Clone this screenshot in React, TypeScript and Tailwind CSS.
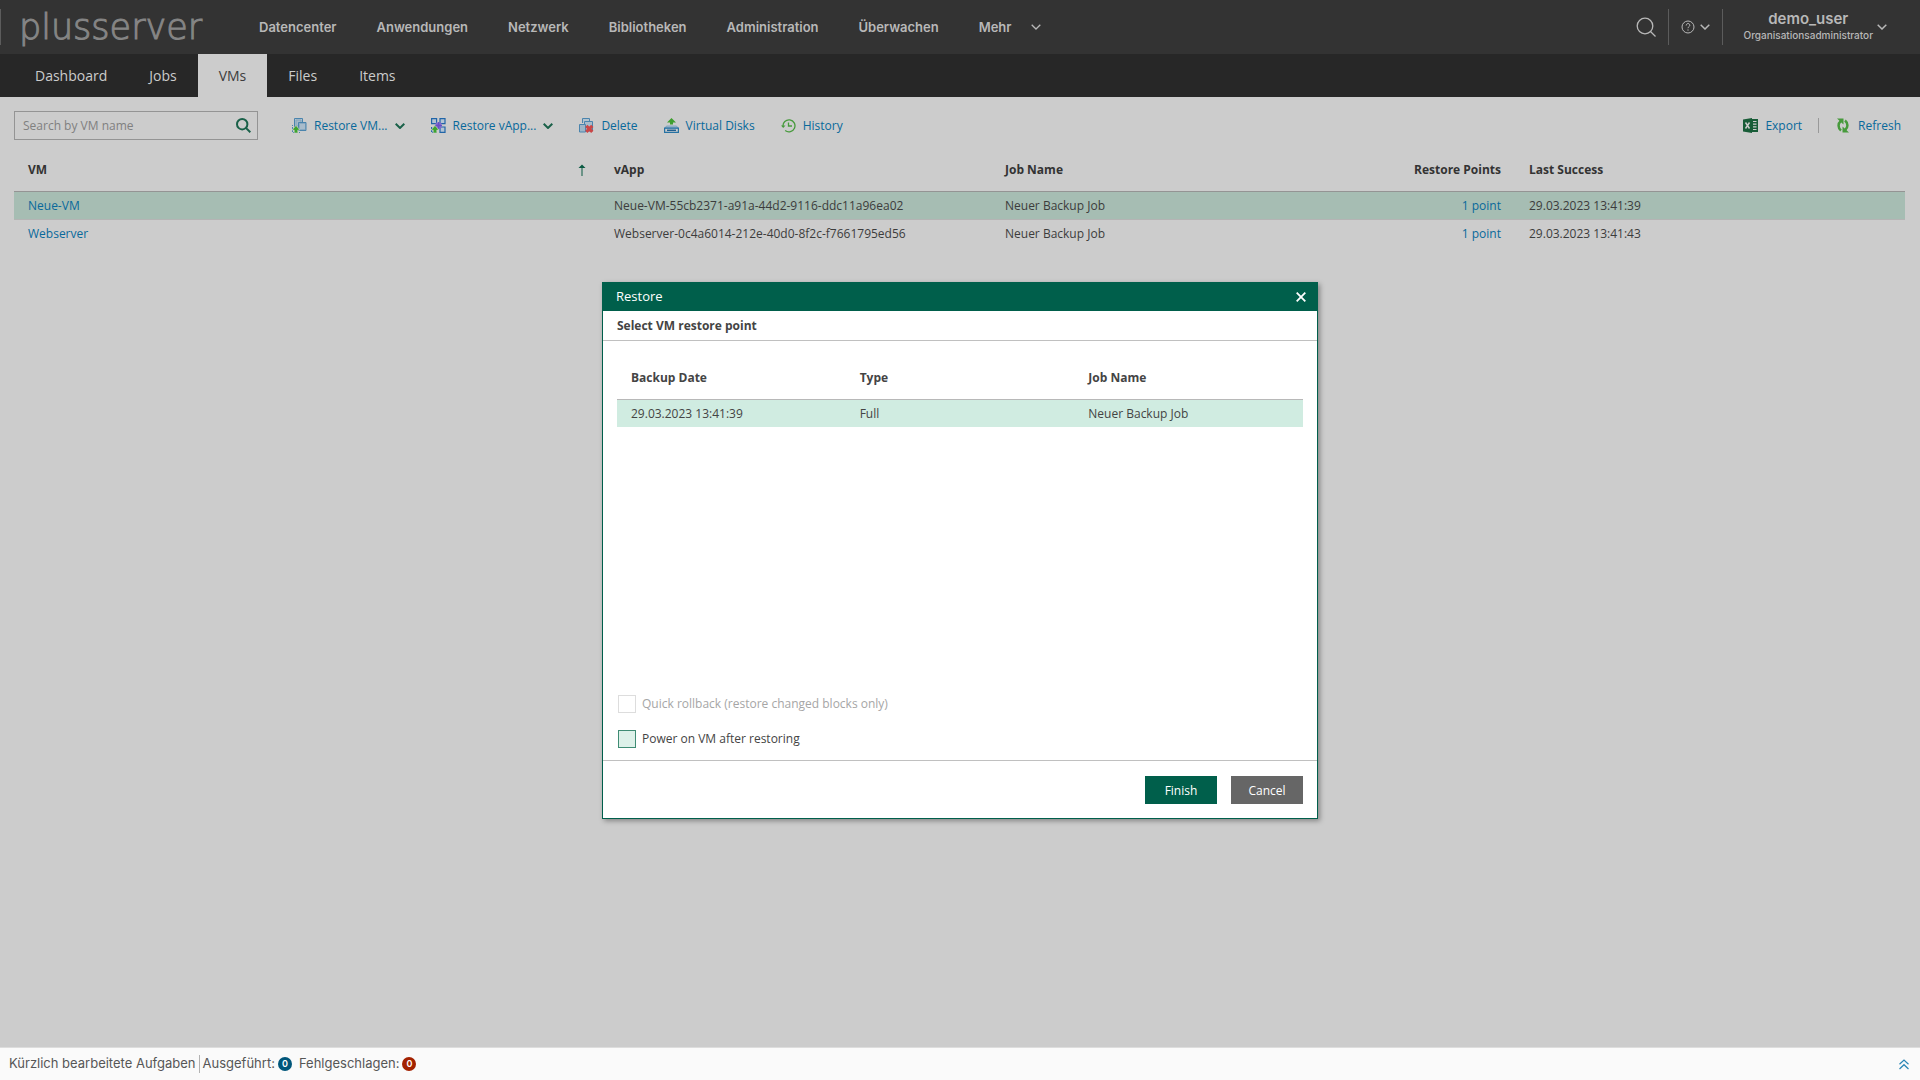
import React from "react";

const RestoreArrow = () => (
  <path d="M0 12l4-4.500 4 4.500H5.800v3H2.200v-3z" fill="#3da52e" stroke="#cccccc" strokeWidth=".6" />
);

const Icon = ({ children }: { children: React.ReactNode }) => (
  <svg viewBox="0 0 15 15" className="size-[15px] shrink-0" fill="none" aria-hidden="true">
    {children}
  </svg>
);

const RestoreVmIcon = () => (
  <Icon>
    <path d="M2.500 9V.500h8V4" fill="#b3c3cf" stroke="#4a84ad" />
    <path d="M4 2h5v6H4z" fill="#a3b8c8" stroke="#7fa3bd" />
    <path d="M6.500 4.500h7.500v8H6.500z" fill="#8aa9c1" stroke="#4a84ad" />
    <path d="M8 6h5v5H8z" fill="#a9bccb" />
    <path d="M.5 14V7M1 14.500h7" stroke="#4a84ad" strokeDasharray="2 1" />
    <RestoreArrow />
  </Icon>
);

const RestoreVappIcon = () => (
  <Icon>
    <g fill="#b4c4d4" stroke="#2065a8" strokeWidth="1.200">
      <path d="M.6.600h5v5h-5zM9 .600h5v5H9zM9 9h5v5.400H9z" />
      <path d="M.6 9v5.400H6" strokeDasharray="2 1" />
    </g>
    <path d="M5 5l5 5M10 5l-5 5" stroke="#8468cf" strokeWidth="2" />
    <path d="M4 7.500h7M7.500 4v7" stroke="#6a4fc6" strokeWidth="1.500" />
    <RestoreArrow />
  </Icon>
);

const DeleteIcon = () => (
  <Icon>
    <path d="M3.500 5V.500h7V4" fill="#b3c3cf" stroke="#4a84ad" />
    <path d="M5.500 3.500H13.500V13H5.500z" fill="#a9bccb" stroke="#4a84ad" />
    <path d="M.5 6.500h6v7.500h-6z" fill="#9db5c7" stroke="#4a84ad" />
    <path d="M7.300 7.800l6 6M13.300 7.800l-6 6" stroke="#cb4646" strokeWidth="3.200" />
  </Icon>
);

const DisksIcon = () => (
  <Icon>
    <path d="M7.500 0L12 4.500H9v2H6v-2H3z" fill="#3f9f2f" />
    <path d="M2.500 8L1 10h13l-1.500-2z" fill="#a9bccb" stroke="#6f9cbb" strokeWidth=".8" />
    <path d="M.6 10.200h13.800v4.200H.6z" stroke="#2672a3" strokeWidth="1.200" />
    <path d="M3 12.300h9" stroke="#1f5f90" strokeWidth="1.500" />
  </Icon>
);

const HistoryIcon = () => (
  <Icon>
    <path d="M2 8.500A6 6 0 1 1 4.200 12.500" stroke="#479a3c" strokeWidth="1.300" />
    <path d="M0 7.500h4.500L2.200 10z" fill="#479a3c" />
    <path d="M7.500 4.500V8H11" stroke="#479a3c" strokeWidth="1.300" />
  </Icon>
);

const ExcelIcon = () => (
  <Icon>
    <path d="M0 1.500L9 0v15L0 13.500z" fill="#185c37" />
    <path d="M9 1h6v13H9z" fill="#185c37" />
    <path d="M10 3.500h3.500M10 6.200h3.500M10 8.900h3.500M10 11.500h3.500" stroke="#cccccc" strokeWidth="1.200" />
    <path d="M2.500 4.500l4 6M6.500 4.500l-4 6" stroke="#cccccc" strokeWidth="1.500" />
  </Icon>
);

const RefreshIcon = () => (
  <Icon>
    <g fill="none" stroke="#479a3c" strokeWidth="2.500">
      <path d="M5 12.500C1.800 10 1.800 5.500 4.800 3" />
      <path d="M9 2.500c3.200 2.500 3.200 7 .2 9.500" />
    </g>
    <path d="M1 .500H7.500v6z" fill="#479a3c" />
    <path d="M13 14.500H6.500v-6z" fill="#479a3c" />
  </Icon>
);

const Chevron = ({ className, width = 1.5 }: { className: string; width?: number }) => (
  <svg viewBox="0 0 10 6" className={className} fill="none" stroke="currentColor" strokeWidth={width} aria-hidden="true">
    <path d="M.7.800L5 5 9.300.800" />
  </svg>
);

const navItems = ["Datencenter", "Anwendungen", "Netzwerk", "Bibliotheken", "Administration", "Überwachen"];
const tabs = ["Dashboard", "Jobs", "VMs", "Files", "Items"];
const rows = [
  { vm: "Neue-VM", vapp: "Neue-VM-55cb2371-a91a-44d2-9116-ddc11a96ea02", time: "29.03.2023 13:41:39" },
  { vm: "Webserver", vapp: "Webserver-0c4a6014-212e-40d0-8f2c-f7661795ed56", time: "29.03.2023 13:41:43" },
];

function TopBar() {
  return (
    <header className="flex h-[54px] shrink-0 items-center bg-[#333333] font-['Inter',sans-serif] text-[#b8b8b8]">
      <div className="h-9 w-px bg-[#5c5c5c]" />
      <a
        href="#home"
        className="ml-[18px] w-60 font-['DejaVu_Sans',sans-serif] text-[35px] leading-[54px] font-extralight text-[#858585] [-webkit-text-stroke:1px_#858585]"
      >
        plusserver
      </a>
      <nav className="flex items-center gap-10 text-[13px] leading-5 font-semibold">
        {navItems.map((item) => (
          <a key={item} href="#nav">{item}</a>
        ))}
        <button className="flex items-center gap-5">
          Mehr
          <Chevron className="h-1.5 w-2.5" width={1.3} />
        </button>
      </nav>
      <div className="ml-auto flex items-center">
        <button aria-label="Suchen" className="mr-3">
          <svg viewBox="0 0 20 20" className="size-5" fill="none" stroke="currentColor" strokeWidth="1.300">
            <circle cx="9" cy="9" r="7.800" />
            <path d="M14.500 14.500l5 5" />
          </svg>
        </button>
        <div className="h-9 w-px bg-[#5c5c5c]" />
        <button aria-label="Hilfe" className="mx-3 flex w-[29px] items-center justify-between">
          <svg viewBox="0 0 14 14" className="size-3.5" fill="none" stroke="currentColor">
            <circle cx="7" cy="7" r="6" />
            <path d="M5.200 5.500c0-2.600 3.600-2.600 3.600-.2 0 1.400-1.800 1.300-1.800 2.900M7 9.400v1.300" />
          </svg>
          <Chevron className="h-1.5 w-2.5" />
        </button>
        <div className="h-9 w-px bg-[#5c5c5c]" />
        <button className="mr-[33px] ml-[21px] flex items-center gap-1">
          <span className="text-center">
            <span className="block text-[15px] leading-4 font-semibold">demo_user</span>
            <span className="block text-[10px] leading-4 font-medium">Organisationsadministrator</span>
          </span>
          <Chevron className="h-1.5 w-2.5" />
        </button>
      </div>
    </header>
  );
}

function TabBar() {
  return (
    <nav className="flex h-[43px] bg-[#272727] pl-3.5 text-sm text-[#cccccc]">
      {tabs.map((tab) => (
        <a
          key={tab}
          href="#tab"
          className={tab === "VMs" ? "flex items-center bg-[#cccccc] px-[21px] text-[#3c3c3c]" : "flex items-center px-[21px]"}
        >
          {tab}
        </a>
      ))}
    </nav>
  );
}

function Toolbar() {
  const link = "flex items-center gap-[7px]";
  return (
    <div className="mt-3.5 flex items-center px-3.5 text-[#08699b]">
      <div className="flex h-[29px] w-[244px] items-center border border-[#949494] pr-1.5 pl-2">
        <input
          aria-label="Search by VM name"
          placeholder="Search by VM name"
          className="min-w-0 flex-1 bg-transparent text-[#3c3c3c] outline-none placeholder:text-[#808080]"
        />
        <button aria-label="Search">
          <svg viewBox="0 0 15 15" className="size-[15px]" fill="none" stroke="#1a6149" strokeWidth="2">
            <circle cx="6.200" cy="6.200" r="5.200" />
            <path d="M9.900 9.900l4.400 4.400" />
          </svg>
        </button>
      </div>
      <div className="ml-[34px] flex items-center gap-[26px]">
        <button className={link}>
          <RestoreVmIcon />
          Restore VM...
          <Chevron className="h-1.5 w-2.5 text-[#1a6149]" width={2} />
        </button>
        <button className={link}>
          <RestoreVappIcon />
          Restore vApp...
          <Chevron className="h-1.5 w-2.5 text-[#1a6149]" width={2} />
        </button>
        <button className={link}><DeleteIcon />Delete</button>
        <button className={link}><DisksIcon />Virtual Disks</button>
        <button className={link}><HistoryIcon />History</button>
      </div>
      <div className="mr-[5px] ml-auto flex items-center">
        <button className={link}><ExcelIcon />Export</button>
        <div className="mr-[17px] ml-4 h-[15px] w-px bg-[#999999]" />
        <button className={link}><RefreshIcon />Refresh</button>
      </div>
    </div>
  );
}

function VmTable() {
  return (
    <div className="mt-2 pr-[15px] pl-3.5">
      <table className="w-full table-fixed border-collapse text-left text-[#3c3c3c]">
        <colgroup>
          <col />
          <col className="w-[391px]" />
          <col className="w-[390px]" />
          <col className="w-[134px]" />
          <col className="w-[390px]" />
        </colgroup>
        <thead>
          <tr className="h-[43px] border-b border-[#949494] text-[#333333] *:px-3.5 *:pt-0.5 *:font-bold">
            <th>
              <span className="flex items-center justify-between">
                VM
                <svg viewBox="0 0 8 12" className="h-3 w-2" fill="none" stroke="#0a5a42" aria-label="aufsteigend">
                  <path d="M4 12V2" />
                  <path d="M.5 4L4 .500 7.500 4z" fill="#0a5a42" stroke="none" />
                </svg>
              </span>
            </th>
            <th>vApp</th>
            <th>Job Name</th>
            <th className="text-right whitespace-nowrap">Restore Points</th>
            <th>Last Success</th>
          </tr>
        </thead>
        <tbody>
          {rows.map((row, i) => (
            <tr
              key={row.vm}
              className={
                i === 0
                  ? "h-7 border-b border-[#b4b4b4] bg-[#a6bdb3] *:px-3.5 *:pt-0.5"
                  : "h-7 *:px-3.5 *:pt-0.5"
              }
            >
              <td><a href="#vm" className="text-[#08699b]">{row.vm}</a></td>
              <td className="whitespace-nowrap">{row.vapp}</td>
              <td>Neuer Backup Job</td>
              <td className="text-right"><a href="#points" className="text-[#08699b]">1 point</a></td>
              <td>{row.time}</td>
            </tr>
          ))}
        </tbody>
      </table>
    </div>
  );
}

function RestoreDialog() {
  return (
    <div
      role="dialog"
      aria-labelledby="restore-title"
      className="flex h-[537px] w-[716px] flex-col border border-[#005f4b] bg-white text-[#444444] shadow-[2px_2px_5px_rgba(0,0,0,0.35)]"
    >
      <div className="flex h-7 items-center justify-between bg-[#005f4b] pr-[11px] pl-[13px] text-white">
        <h2 id="restore-title" className="text-[13px]">Restore</h2>
        <button aria-label="Close">
          <svg viewBox="0 0 10 10" className="size-2.5" stroke="currentColor" strokeWidth="1.800">
            <path d="M.7.700l8.600 8.600M9.300.700L.7 9.300" />
          </svg>
        </button>
      </div>
      <h3 className="flex h-[30px] items-center border-b border-[#c0c0c0] px-3.5 font-bold">Select VM restore point</h3>
      <div className="flex-1 px-3.5 pt-[15px]">
        <table className="w-full table-fixed border-collapse text-left">
          <thead>
            <tr className="h-[43px] border-b border-[#b8b8b8] *:px-3.5 *:pt-0.5 *:font-bold">
              <th>Backup Date</th>
              <th>Type</th>
              <th>Job Name</th>
            </tr>
          </thead>
          <tbody>
            <tr className="h-7 bg-[#d0ece1] *:px-3.5 *:pt-0.5">
              <td>29.03.2023 13:41:39</td>
              <td>Full</td>
              <td>Neuer Backup Job</td>
            </tr>
          </tbody>
        </table>
      </div>
      <div className="flex flex-col gap-[17px] px-[15px] pb-3">
        <label className="flex items-center gap-1.5 text-[#a6a6a6]">
          <input type="checkbox" disabled className="size-[18px] appearance-none border border-[#dddddd]" />
          Quick rollback (restore changed blocks only)
        </label>
        <label className="flex items-center gap-1.5">
          <input type="checkbox" className="size-[18px] appearance-none border border-[#3f8c74] bg-[#ddf1e9]" />
          Power on VM after restoring
        </label>
      </div>
      <div className="flex justify-end gap-3.5 border-t border-[#c0c0c0] px-3.5 pt-[15px] pb-3.5 text-white">
        <button className="h-7 w-[72px] bg-[#005f4b] pt-0.5">Finish</button>
        <button className="h-7 w-[72px] bg-[#666666] pt-0.5">Cancel</button>
      </div>
    </div>
  );
}

function StatusBar() {
  const badge = "flex size-3.5 items-center justify-center rounded-full text-[9px] font-semibold text-white";
  return (
    <footer className="flex h-[33px] shrink-0 items-center border-t border-[#dddddd] bg-[#fafafa] pl-[9px] font-['Inter',sans-serif] text-[13px] text-[#565656]">
      <span>Kürzlich bearbeitete Aufgaben</span>
      <div className="mx-[3px] h-[18px] w-px bg-[#b3b3b3]" />
      <span>Ausgeführt:</span>
      <span className={`${badge} ml-[3px] bg-[#00567a]`}>0</span>
      <span className="ml-[7px]">Fehlgeschlagen:</span>
      <span className={`${badge} ml-[3px] bg-[#a32100]`}>0</span>
      <button aria-label="Öffnen" className="mr-[11px] ml-auto text-[#2a86b5]">
        <svg viewBox="0 0 10 11" className="h-[11px] w-2.5" fill="none" stroke="currentColor" strokeWidth="1.200">
          <path d="M.5 5.300L5 1l4.500 4.300M.5 10L5 5.700 9.500 10" />
        </svg>
      </button>
    </footer>
  );
}

export default function App() {
  return (
    <div className="flex min-h-screen flex-col bg-[#cccccc] font-['Open_Sans',sans-serif] text-xs">
      <TopBar />
      <main className="relative flex-1">
        <TabBar />
        <Toolbar />
        <VmTable />
        <div className="absolute inset-0 grid place-items-center">
          <RestoreDialog />
        </div>
      </main>
      <StatusBar />
    </div>
  );
}
